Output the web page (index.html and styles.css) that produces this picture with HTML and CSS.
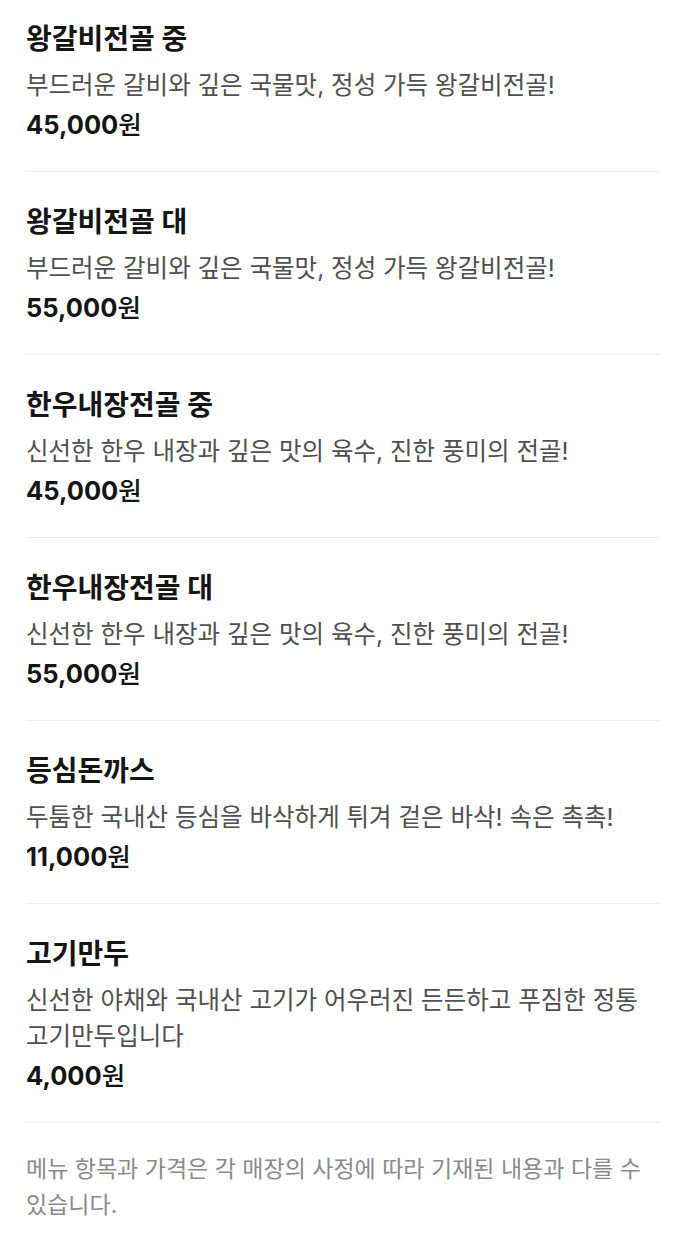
FILE: index.html
```html
<!DOCTYPE html>
<html lang="ko">
<head>
  <meta charset="UTF-8" />
  <meta name="viewport" content="width=device-width, initial-scale=1.0"/>
  <title>메뉴</title>
  <link rel="stylesheet" href="styles.css">
</head>
<body>
  <div class="menu">
    <div class="menu-item">
      <h3 class="name">왕갈비전골 중</h3>
      <p class="desc">부드러운 갈비와 깊은 국물맛, 정성 가득 왕갈비전골!</p>
      <p class="price">45,000<span>원</span></p>
    </div>
    <div class="menu-item">
      <h3 class="name">왕갈비전골 대</h3>
      <p class="desc">부드러운 갈비와 깊은 국물맛, 정성 가득 왕갈비전골!</p>
      <p class="price">55,000<span>원</span></p>
    </div>
    <div class="menu-item">
      <h3 class="name">한우내장전골 중</h3>
      <p class="desc">신선한 한우 내장과 깊은 맛의 육수, 진한 풍미의 전골!</p>
      <p class="price">45,000<span>원</span></p>
    </div>
    <div class="menu-item">
      <h3 class="name">한우내장전골 대</h3>
      <p class="desc">신선한 한우 내장과 깊은 맛의 육수, 진한 풍미의 전골!</p>
      <p class="price">55,000<span>원</span></p>
    </div>
    <div class="menu-item">
      <h3 class="name">등심돈까스</h3>
      <p class="desc">두툼한 국내산 등심을 바삭하게 튀겨 겉은 바삭! 속은 촉촉!</p>
      <p class="price">11,000<span>원</span></p>
    </div>
    <div class="menu-item">
      <h3 class="name">고기만두</h3>
      <p class="desc">신선한 야채와 국내산 고기가 어우러진 든든하고 푸짐한 정통 고기만두입니다</p>
      <p class="price">4,000<span>원</span></p>
    </div>
    <p class="notice">메뉴 항목과 가격은 각 매장의 사정에 따라 기재된 내용과 다를 수 있습니다.</p>
  </div>
</body>
</html>
```

FILE: styles.css
```css
* {
  margin: 0;
  padding: 0;
  box-sizing: border-box;
}
body {
  font-family: Inter, 'Noto Sans CJK KR', sans-serif;
  background: #fff;
  color: #111;
  word-break: keep-all;
}
.menu {
  padding: 0 22px 0 26px;
}
.menu-item {
  padding: 32px 0 29px;
  border-bottom: 1px solid #eeeeee;
}
.menu-item:first-child {
  padding-top: 21px;
}
.name {
  font-size: 28px;
  line-height: 36px;
  font-weight: 700;
  color: #151515;
  margin-bottom: 10px;
}
.desc {
  font-size: 24.5px;
  line-height: 36px;
  color: #505050;
}
.price {
  margin-top: 5px;
  font-size: 25.5px;
  line-height: 34px;
  font-weight: 700;
  color: #151515;
}
.price span {
  font-weight: 500;
}
.notice {
  padding-top: 28px;
  font-size: 23px;
  line-height: 36px;
  color: #8a8a8a;
}
```
